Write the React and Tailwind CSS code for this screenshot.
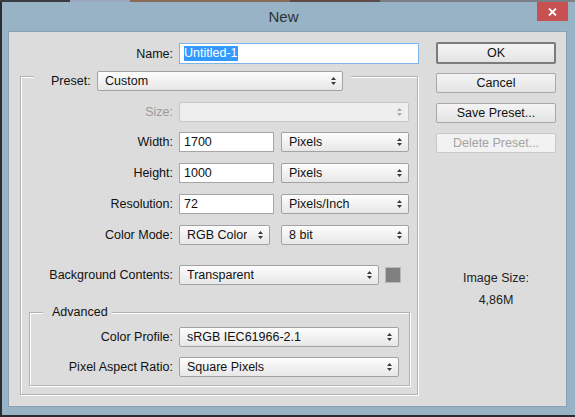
import React from "react";

const font = { fontFamily: '"Liberation Sans", Arial, sans-serif' };

// small up/down arrow used in the dropdowns
const Arrows = ({ disabled }) => (
  <svg width="7" height="10" viewBox="0 0 7 10" className="shrink-0">
    <path d="M1 4 L3.5 1 L6 4 Z M1 6 L3.5 9 L6 6 Z" fill={disabled ? "#a8a8a8" : "#3a3a3a"} />
  </svg>
);

const Select = ({ value, className = "", disabled }) => (
  <div
    className={`flex h-[20px] shrink-0 items-center justify-between rounded-[2px] border pl-[7px] pr-[5px] ${
      disabled
        ? "border-[#c6c6c6] bg-[#eeeeee]"
        : "border-[#a2a2a2] bg-linear-to-b from-[#fdfdfd] to-[#e7e7e7]"
    } ${className}`}
  >
    <span className="truncate leading-[14px] text-[#111]">{value}</span>
    <Arrows disabled={disabled} />
  </div>
);

const Input = ({ value, className = "" }) => (
  <div
    className={`flex h-[20px] shrink-0 items-center border border-[#a6a6a6] bg-white pl-[4px] leading-[14px] text-[#111] ${className}`}
  >
    {value}
  </div>
);

const Label = ({ children, className = "", muted }) => (
  <div className={`shrink-0 whitespace-nowrap text-right leading-[14px] ${muted ? "text-[#9b9b9b]" : "text-[#111]"} ${className}`}>
    {children}
  </div>
);

const Button = ({ children, disabled, primary, className = "" }) => (
  <div
    className={`flex w-[120px] items-center justify-center rounded-[2px] leading-[14px] ${
      disabled
        ? "h-[20px] border border-[#c8c8c8] bg-[#f2f2f2] text-[#a3a3a3]"
        : primary
        ? "h-[22px] border-2 border-[#7b7b7b] bg-linear-to-b from-[#f4f4f4] to-[#e4e4e4] text-[#111]"
        : "h-[20px] border border-[#a8a8a8] bg-linear-to-b from-[#f4f4f4] to-[#e4e4e4] text-[#111]"
    } ${className}`}
  >
    {children}
  </div>
);

export default function App() {
  return (
    <div className="relative h-[417px] w-[575px] overflow-hidden bg-[#2b2d30] text-[12.5px]" style={font}>
      {/* wallpaper strip behind the window */}
      <div className="flex h-[2px]">
        <div className="w-[70px] bg-[#3a3c40]" />
        <div className="w-[60px] bg-[#9aa7bf]" />
        <div className="w-[160px] bg-[#8a6a58]" />
        <div className="w-[90px] bg-[#5c4c48]" />
        <div className="flex-1 bg-[#7d7f86]" />
      </div>

      {/* window frame */}
      <div className="ml-[2px] flex h-[413px] w-[573px] flex-col bg-[#97b3c5] pl-[6px] pr-[8px] pb-[8px]">
        {/* title bar */}
        <div className="relative flex h-[29px] shrink-0 items-center justify-center">
          <span className="pr-[8px] text-[15px] leading-[18px] text-[#2c3238]">New</span>
          <div className="absolute right-[-1px] top-0 flex h-[19px] w-[31px] items-center justify-center bg-[#c75050]">
            <svg width="9" height="8" viewBox="0 0 9 8">
              <path d="M1 0.5 L8 7.5 M8 0.5 L1 7.5" stroke="#fff" strokeWidth="1.8" />
            </svg>
          </div>
        </div>

        {/* client area */}
        <div className="flex flex-1 border border-[#8aa0b0] bg-[#dcdcdc]">
          {/* left column */}
          <div className="w-[427px] shrink-0">
            <div className="mt-[11px] flex items-center gap-[6px]">
              <Label className="w-[164px]">Name:</Label>
              <div className="flex h-[21px] w-[240px] items-center border border-[#7eb4ea] bg-white pl-[4px]">
                <span className="bg-[#3399ff] leading-[15px] text-white">Untitled-1</span>
              </div>
            </div>

            {/* Preset group */}
            <div className="ml-[11px] mt-[12px] h-[319px] w-[398px] border border-[#b2b2b2] shadow-[inset_1px_1px_0_#fff,1px_1px_0_#fff]">
              <div className="-mt-[6px] ml-[13px] flex h-[19px] w-[317px] items-center gap-[6px] bg-[#dcdcdc] pl-[17px] pr-[8px]">
                <div className="w-[40px] shrink-0 whitespace-nowrap leading-[14px] text-[#111]">Preset:</div>
                <Select value="Custom" className="h-[19px] w-[246px]" />
              </div>

              <div className="mt-[12px] flex items-center gap-[6px]">
                <Label className="w-[152px]" muted>Size:</Label>
                <Select value="" className="w-[230px]" disabled />
              </div>

              <div className="mt-[10px] flex items-center">
                <Label className="w-[152px]">Width:</Label>
                <Input value="1700" className="ml-[6px] w-[95px]" />
                <Select value="Pixels" className="ml-[7px] w-[128px]" />
              </div>

              <div className="mt-[11px] flex items-center">
                <Label className="w-[152px]">Height:</Label>
                <Input value="1000" className="ml-[6px] w-[95px]" />
                <Select value="Pixels" className="ml-[7px] w-[128px]" />
              </div>

              <div className="mt-[11px] flex items-center">
                <Label className="w-[152px]">Resolution:</Label>
                <Input value="72" className="ml-[6px] w-[95px]" />
                <Select value="Pixels/Inch" className="ml-[7px] w-[128px]" />
              </div>

              <div className="mt-[11px] flex items-center">
                <Label className="w-[152px]">Color Mode:</Label>
                <Select value="RGB Color" className="ml-[6px] w-[91px]" />
                <Select value="8 bit" className="ml-[11px] w-[128px]" />
              </div>

              <div className="mt-[20px] flex items-center">
                <Label className="w-[152px]">Background Contents:</Label>
                <Select value="Transparent" className="ml-[6px] w-[200px]" />
                <div className="ml-[6px] h-[16px] w-[16px] border border-[#b8b8b8] bg-[#808080]" />
              </div>

              {/* Advanced group */}
              <div className="ml-[8px] mt-[27px] h-[74px] w-[381px] border border-[#b2b2b2] shadow-[inset_1px_1px_0_#fff,1px_1px_0_#fff]">
                <div className="-mt-[8px] ml-[13px] w-fit bg-[#dcdcdc] pl-[9px] pr-[4px] leading-[14px] text-[#111]">
                  Advanced
                </div>
                <div className="mt-[8px] flex items-center gap-[6px]">
                  <Label className="w-[143px]">Color Profile:</Label>
                  <Select value="sRGB IEC61966-2.1" className="w-[220px]" />
                </div>
                <div className="mt-[10px] flex items-center gap-[6px]">
                  <Label className="w-[143px]">Pixel Aspect Ratio:</Label>
                  <Select value="Square Pixels" className="w-[220px]" />
                </div>
              </div>
            </div>
          </div>

          {/* right column */}
          <div className="flex w-[120px] shrink-0 flex-col">
            <Button primary className="mt-[10px]">OK</Button>
            <Button className="mt-[9px]">Cancel</Button>
            <Button className="mt-[10px]">Save Preset...</Button>
            <Button disabled className="mt-[10px]">Delete Preset...</Button>
            <div className="mt-[117px] text-center leading-[16px] text-[#222]">Image Size:</div>
            <div className="mt-[6px] text-center leading-[16px] text-[#222]">4,86M</div>
          </div>
        </div>
      </div>
    </div>
  );
}
